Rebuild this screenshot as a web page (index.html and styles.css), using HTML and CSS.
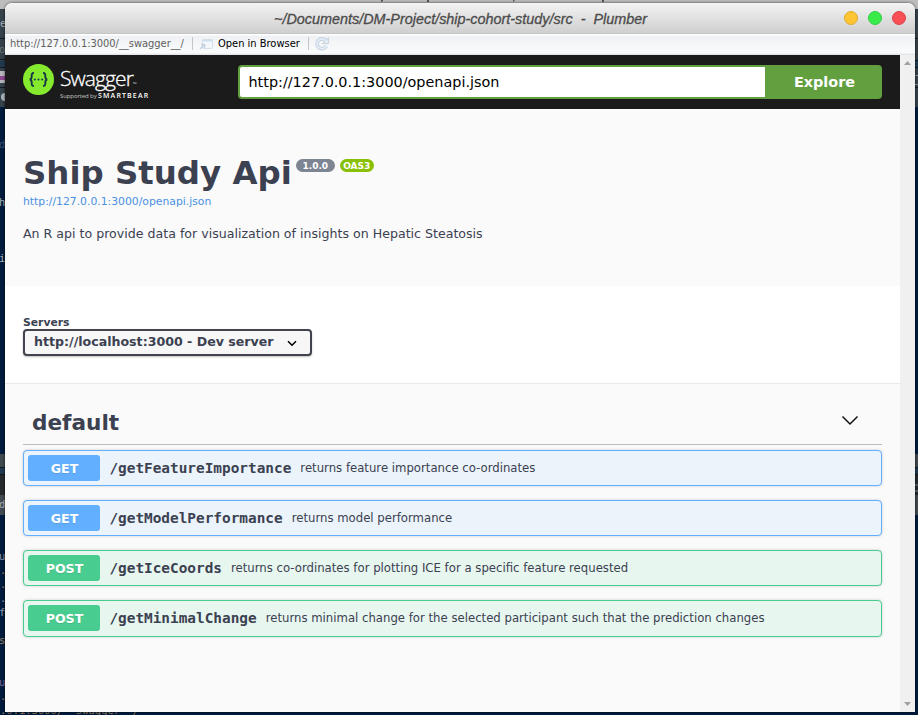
FILE: index.html
```html
<!DOCTYPE html>
<html lang="en">
<head>
<meta charset="utf-8">
<title>Plumber</title>
<link rel="stylesheet" href="styles.css">
</head>
<body>
<div class="desktop" aria-hidden="true">
  <div class="topstrip"></div>
  <div class="chrome left"></div>
  <div class="chrome right"></div>
  <div class="panel left"></div>
  <div class="panel right"></div>
  <svg class="scraps" width="918" height="715" viewBox="0 0 918 715">
    <path d="M0 38.500h5M0 59.500h5M0 67.500h5M0 87.500h5M915 38.500h3M915 60.500h3M915 67.500h3M915 87.500h3" stroke="#101820"/>
    <path d="M0 61h5v6H0zM915 61h3v6h-3z" fill="#223a50"/>
    <path d="M0 71h5v12H0z" fill="#b8b6bd"/>
    <path d="M0 78h5" stroke="#904a94" stroke-width="4"/>
    <circle cx="5" cy="97" r="4" fill="#aab6bd"/>
    <path d="M915 75.500h3M915 84.500h3M915 485h3M915 491h3" stroke="#8d9294"/>
    <g fill="#55524f">
      <path d="M381 0h2v1l-2 1zM427 0h2v2h-2zM513 0h2l-2 2zM602 0h2v2h-2z"/>
    </g>
    <g class="code">
      <text x="0" y="27" fill="#abb3b8">e</text>
      <text x="-1" y="53" fill="#68747c">o</text>
      <text x="-1" y="148" fill="#38527a">d</text>
      <text x="-1" y="206" fill="#a8afba">h</text>
      <text x="-1" y="262" fill="#a8afba">i</text>
      <text x="-1" y="508" fill="#abb3b8">d</text>
      <text x="-1" y="560" fill="#8c96a5">u</text>
      <text x="0" y="574" fill="#a08060">.</text>
      <text x="0" y="588" fill="#a08060">.</text>
      <text x="0" y="602" fill="#8c96a5">.</text>
      <text x="-1" y="616" fill="#8c96a5">f</text>
      <text x="-1" y="644" fill="#a08060">s</text>
      <text x="-1" y="686" fill="#7e669e">u</text>
      <text x="0" y="700" fill="#a08060">.</text>
      <text x="0" y="714" fill="#8f7657">.0.1:3000/__swagger__/</text>
    </g>
  </svg>
</div>
<div class="window">
  <header class="titlebar">
    <span class="title">~/Documents/DM-Project/ship-cohort-study/src&nbsp; -&nbsp; Plumber</span>
    <div class="lights"><i class="min"></i><i class="max"></i><i class="close"></i></div>
  </header>
  <div class="toolbar">
    <span class="addr">http://127.0.0.1:3000/__swagger__/</span>
    <i class="sep"></i>
    <svg class="open-icon" width="14" height="12" viewBox="0 0 14 12"><rect x="3.500" y="1.500" width="10" height="9" rx="1" fill="#f3f8fc" stroke="#d3dfeb"/><path d="M3.500 2.500h10" stroke="#cde0ee" stroke-width="2"/><path d="M1 11 5 7M2 6.500h3.500V10" fill="none" stroke="#c6d3df" stroke-width="1.600"/></svg>
    <span class="open">Open in Browser</span>
    <i class="sep second"></i>
    <svg class="refresh" width="14" height="14" viewBox="0 0 14 14"><path d="M11.300 9A4.900 4.900 0 1 1 10.800 3.800" fill="none" stroke="#c3d0de" stroke-width="3.600"/><path d="M13.400.7V6.600H7.500z" fill="#e4eef8" stroke="#c3d0de"/><path d="M11.300 9A4.900 4.900 0 1 1 10.800 3.800" fill="none" stroke="#e4eef8" stroke-width="1.800"/></svg>
  </div>
  <div class="viewport">
    <main class="page">
      <div class="topbar">
        <div class="logo">
          <svg width="31" height="31" viewBox="0 0 31 31"><circle cx="15.500" cy="15.500" r="15.500" fill="#85ea2d"/><path d="M11 9C8.500 9 8.700 10.500 8.700 12.500S8.500 15.300 6.700 15.500C8.500 15.700 8.700 16.700 8.700 18.500S8.500 22 11 22M20 9c2.500 0 2.300 1.500 2.300 3.500s.2 2.800 2 3c-1.800.2-2 1.200-2 3s.2 3.500-2.300 3.500" fill="none" stroke="#173647" stroke-width="1.900"/><g fill="#173647"><circle cx="11.800" cy="15.600" r="1"/><circle cx="15.500" cy="15.600" r="1"/><circle cx="19.200" cy="15.600" r="1"/></g></svg>
          <div class="words"><div class="brand">Swagger<small>™</small></div><div class="by"><span>Supported by</span><b>SMARTBEAR</b></div></div>
        </div>
        <div class="search"><div class="input">http://127.0.0.1:3000/openapi.json</div><div class="explore">Explore</div></div>
      </div>
      <section class="info">
        <div class="heading"><h1>Ship Study Api</h1><span class="badge">1.0.0</span><span class="badge oas">OAS3</span></div>
        <a class="link">http://127.0.0.1:3000/openapi.json</a>
        <p>An R api to provide data for visualization of insights on Hepatic Steatosis</p>
      </section>
      <section class="servers">
        <div class="label">Servers</div>
        <div class="select"><span>http://localhost:3000 - Dev server</span><svg width="10" height="7" viewBox="0 0 10 7"><path d="m1 1.200 4 4 4-4" fill="none" stroke="#000" stroke-width="1.500"/></svg></div>
      </section>
      <section class="ops">
        <div class="tag"><h3>default</h3><svg width="18" height="11" viewBox="0 0 18 11"><path d="m1.500 1.500 7.500 7.500 7.500-7.500" fill="none" stroke="#111" stroke-width="1.500"/></svg></div>
        <div class="op get"><span class="method">GET</span><span class="path">/getFeatureImportance</span><span class="desc">returns feature importance co-ordinates</span></div>
        <div class="op get"><span class="method">GET</span><span class="path">/getModelPerformance</span><span class="desc">returns model performance</span></div>
        <div class="op post"><span class="method">POST</span><span class="path">/getIceCoords</span><span class="desc">returns co-ordinates for plotting ICE for a specific feature requested</span></div>
        <div class="op post last"><span class="method">POST</span><span class="path">/getMinimalChange</span><span class="desc">returns minimal change for the selected participant such that the prediction changes</span></div>
      </section>
    </main>
    <div class="scrollbar"><svg width="7" height="4" viewBox="0 0 7 4"><path d="M0 4 3.500 0 7 4z" fill="#a0a0a0"/></svg><svg width="7" height="4" viewBox="0 0 7 4"><path d="M0 0h7L3.500 4z" fill="#a0a0a0"/></svg></div>
  </div>
</div>
</body>
</html>
```
FILE: styles.css
```css
* { box-sizing: border-box; }
body { margin: 0; width: 918px; height: 715px; overflow: hidden; background: #001b3d; font-family: "DejaVu Sans", sans-serif; color: #3b4151; position: relative; }
.desktop, .scraps { position: absolute; left: 0; top: 0; width: 918px; height: 715px; }
.topstrip { position: absolute; left: 0; top: 0; width: 918px; height: 9px; background: #bdbdbd; }
.chrome { position: absolute; top: 9px; height: 98px; background: #36424b; }
.panel { position: absolute; top: 454px; height: 61px; background: linear-gradient(#40494f 0 13px, #101820 13px 14px, #203a52 14px 20px, #101820 20px 21px, #25292c 21px 41px, #414a50 41px); }
.left { left: 0; width: 10px; }
.right { right: 0; width: 10px; }
.code { font: 10.5px "DejaVu Sans Mono", monospace; }
.window { position: absolute; left: 5px; top: 3px; width: 910px; height: 709px; border-radius: 7px 7px 0 0; overflow: hidden; background: #fafafa; box-shadow: 0 0 3px rgba(0,0,0,.7); display: flex; flex-direction: column; }
.titlebar { height: 31px; flex: none; display: flex; align-items: center; padding: 0 9px 0 269px; justify-content: space-between; background: linear-gradient(#f3f3f3, #cfcfcf); border-bottom: 1px solid #c4c4c4; }
.title { font: italic 14.4px/18px "Liberation Sans", sans-serif; color: #4b4b4b; -webkit-text-stroke: .3px #4b4b4b; white-space: nowrap; padding-top: 2px; }
.lights { display: flex; gap: 10px; margin-top: -1px; }
.lights i { width: 14px; height: 14px; border-radius: 50%; border: 1px solid; }
.min { background: #fdc434; border-color: #dfab2d !important; }
.max { background: #38eb49; border-color: #2fd043 !important; }
.close { background: #f84e55; border-color: #dc444b !important; }
.toolbar { height: 21px; flex: none; display: flex; align-items: center; padding-left: 5px; background: linear-gradient(#fff 0 1px, #eff1f4 2px, #fafcfc 19px, #e5e6ec 20px); font: 11px/14px "DejaVu Sans Condensed", "DejaVu Sans", sans-serif; white-space: nowrap; }
.addr { width: 182px; color: #606060; padding-bottom: 2px; letter-spacing: -.02px; }
.sep { width: 1px; height: 13px; background: #c2c6cb; flex: none; margin-bottom: 2px; }
.open-icon { margin-left: 6px; margin-top: -1px; }
.open { width: 90px; margin-left: 5px; color: #000; padding-bottom: 2px; }
.refresh { margin-left: 6px; margin-top: -1px; }
.viewport { flex: 1; display: flex; }
.page { width: 895px; background: #fafafa; }
.scrollbar { width: 15px; background: #f0f0f0; display: flex; flex-direction: column; align-items: center; justify-content: space-between; padding: 6px 0 6px; }
.topbar { height: 54px; background: #1b1b1b; display: flex; align-items: center; padding: 0 18px; }
.logo { width: 215px; height: 36px; display: flex; margin-top: -1px; }
.words { margin: 4px 0 0 6px; color: #fff; white-space: nowrap; }
.brand { font: 21px/21px "Open Sans", sans-serif; font-weight: 300; letter-spacing: -.9px; height: 22px; -webkit-text-stroke: .3px #fff; }
.brand small { font-size: 5px; -webkit-text-stroke: 0; }
.by { display: flex; font: 6px/10px "Open Sans", sans-serif; padding-top: 1px; }
.by span { width: 38px; color: #c8c8c8; letter-spacing: -.1px; }
.by b { font-size: 7px; font-weight: 600; letter-spacing: 1.15px; }
.search { width: 644px; height: 34px; border: 2px solid #62a03f; border-radius: 4px; display: flex; background: #62a03f; overflow: hidden; }
.input { width: 525px; background: #fff; color: #000; font-size: 14.4px; line-height: 30px; padding-left: 8.500px; }
.explore { flex: 1; text-align: center; color: #fff; font-weight: 700; font-size: 14.4px; line-height: 30px; padding-left: 4px; }
.info { height: 177px; padding: 45px 18px 0; }
.heading { display: flex; align-items: flex-start; height: 41px; }
h1 { margin: 0; font-size: 32.4px; line-height: 38px; white-space: nowrap; }
.badge { margin: 5px 0 0 4px; height: 13px; width: 39px; text-align: center; border-radius: 7px; background: #7d8492; color: #fff; font: bold 9px/15px "DejaVu Sans", sans-serif; }
.oas { width: 34px; margin-left: 5px; background: #89bf04; }
.link { display: block; color: #4990e2; font-size: 10.8px; line-height: 14px; }
.info p { margin: 16px 0 0; font-size: 12.6px; line-height: 18px; }
.servers { height: 98px; background: #fff; border-bottom: 1px solid #e9e9e9; padding: 30px 18px 0; }
.label { font-weight: 700; font-size: 10.8px; line-height: 13px; }
.select { width: 289px; height: 27px; border: 2px solid #41444e; border-radius: 4px; background: #f7f7f7; box-shadow: 0 1px 2px rgba(0,0,0,.25); display: flex; align-items: center; justify-content: space-between; padding: 0 13px 0 9px; font-size: 12.6px; font-weight: 700; white-space: nowrap; }
.select span { margin-top: -3px; }
.select svg { margin-top: 1px; }
.ops { padding: 16px 18px 0; }
.tag { height: 45px; border-bottom: 1px solid #bdbec4; display: flex; justify-content: space-between; align-items: center; padding: 0 23px 0 9px; margin-bottom: 5px; }
.tag svg { margin-top: -4px; }
h3 { margin: 2px 0 0; font-size: 21.6px; line-height: 26px; }
.op { height: 36px; margin-bottom: 14px; border: 1px solid; border-radius: 4px; box-shadow: 0 0 3px rgba(0,0,0,.19); display: flex; align-items: center; padding-left: 4px; white-space: nowrap; }
.last { height: 37px; padding-bottom: 1px; }
.get { border-color: #61affe; background: #ebf3fb; }
.post { border-color: #49cc90; background: #e8f6f0; }
.method { width: 72px; height: 26px; border-radius: 3px; background: #61affe; color: #fff; text-align: center; font: bold 12.6px/27px "DejaVu Sans", sans-serif; text-shadow: 0 1px 0 rgba(0,0,0,.1); padding-left: 1px; }
.post .method { background: #49cc90; }
.path { margin-left: 9.400px; font: bold 14.4px/20px "DejaVu Sans Mono", monospace; }
.desc { margin-left: 9px; font: 11.7px/16px "DejaVu Sans", sans-serif; }
```
